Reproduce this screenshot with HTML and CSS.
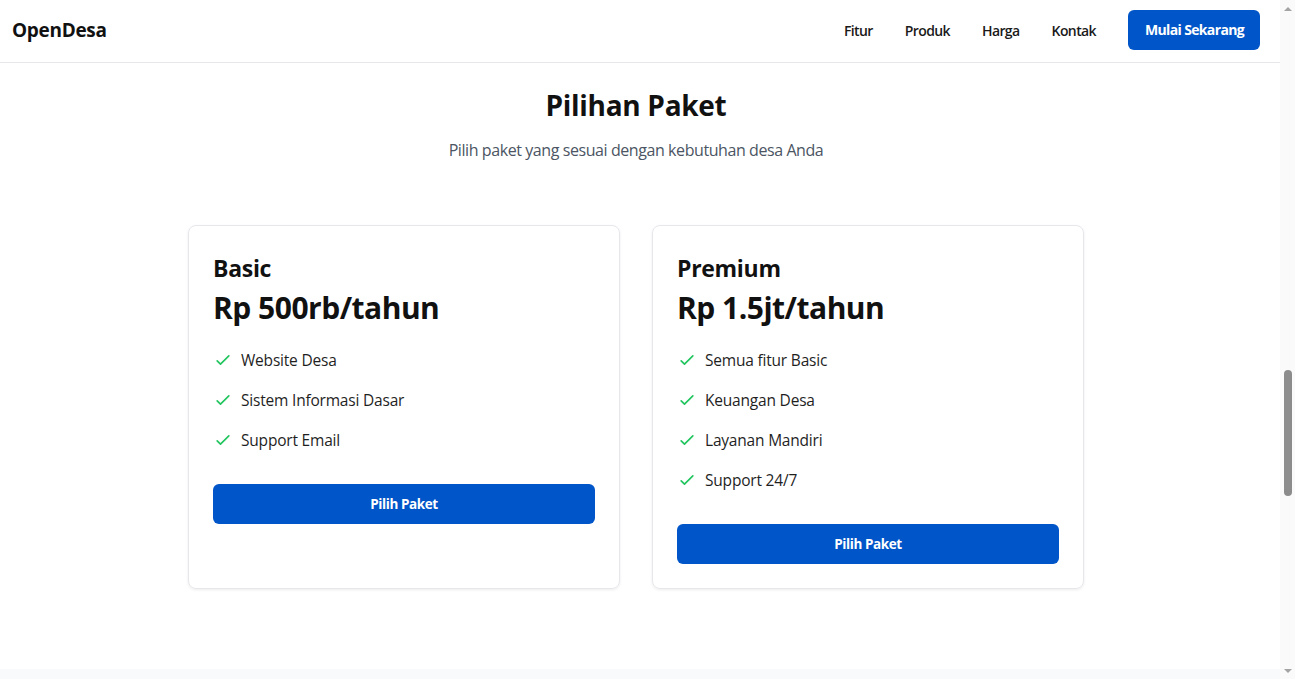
FILE: index.html
```html
<!DOCTYPE html>
<html lang="id">
<head>
<meta charset="utf-8">
<title>OpenDesa - Pilihan Paket</title>
<link rel="stylesheet" href="styles.css">
</head>
<body>
<div class="page">
  <header class="nav">
    <div class="logo">OpenDesa</div>
    <nav class="nav-links">
      <a href="#" class="nav-link">Fitur</a>
      <a href="#" class="nav-link">Produk</a>
      <a href="#" class="nav-link">Harga</a>
      <a href="#" class="nav-link">Kontak</a>
      <a href="#" class="nav-cta">Mulai Sekarang</a>
    </nav>
  </header>
  <main class="main">
    <section class="pricing">
      <h2 class="pricing-title">Pilihan Paket</h2>
      <p class="pricing-subtitle">Pilih paket yang sesuai dengan kebutuhan desa Anda</p>
      <div class="plans">
        <div class="plan">
          <h3 class="plan-name">Basic</h3>
          <div class="plan-price">Rp 500rb/tahun</div>
          <ul class="features">
            <li class="feature"><svg class="check" viewBox="0 0 24 24" fill="none" stroke="currentColor" stroke-width="2" stroke-linecap="round" stroke-linejoin="round"><path d="M5 13l4 4L19 7"/></svg><span>Website Desa</span></li>
            <li class="feature"><svg class="check" viewBox="0 0 24 24" fill="none" stroke="currentColor" stroke-width="2" stroke-linecap="round" stroke-linejoin="round"><path d="M5 13l4 4L19 7"/></svg><span>Sistem Informasi Dasar</span></li>
            <li class="feature"><svg class="check" viewBox="0 0 24 24" fill="none" stroke="currentColor" stroke-width="2" stroke-linecap="round" stroke-linejoin="round"><path d="M5 13l4 4L19 7"/></svg><span>Support Email</span></li>
          </ul>
          <a href="#" class="plan-btn">Pilih Paket</a>
        </div>
        <div class="plan">
          <h3 class="plan-name">Premium</h3>
          <div class="plan-price">Rp 1.5jt/tahun</div>
          <ul class="features">
            <li class="feature"><svg class="check" viewBox="0 0 24 24" fill="none" stroke="currentColor" stroke-width="2" stroke-linecap="round" stroke-linejoin="round"><path d="M5 13l4 4L19 7"/></svg><span>Semua fitur Basic</span></li>
            <li class="feature"><svg class="check" viewBox="0 0 24 24" fill="none" stroke="currentColor" stroke-width="2" stroke-linecap="round" stroke-linejoin="round"><path d="M5 13l4 4L19 7"/></svg><span>Keuangan Desa</span></li>
            <li class="feature"><svg class="check" viewBox="0 0 24 24" fill="none" stroke="currentColor" stroke-width="2" stroke-linecap="round" stroke-linejoin="round"><path d="M5 13l4 4L19 7"/></svg><span>Layanan Mandiri</span></li>
            <li class="feature"><svg class="check" viewBox="0 0 24 24" fill="none" stroke="currentColor" stroke-width="2" stroke-linecap="round" stroke-linejoin="round"><path d="M5 13l4 4L19 7"/></svg><span>Support 24/7</span></li>
          </ul>
          <a href="#" class="plan-btn">Pilih Paket</a>
        </div>
      </div>
    </section>
    <section class="next-section"></section>
  </main>
</div>
<div class="scrollbar" aria-hidden="true">
  <div class="sb-arrow sb-up"></div>
  <div class="sb-track"><div class="sb-thumb"></div></div>
  <div class="sb-arrow sb-down"></div>
</div>
</body>
</html>
```

FILE: styles.css
```css
* {
  box-sizing: border-box;
}
body {
  margin: 0;
  font-family: "Open Sans", "Noto Sans", sans-serif;
  color: #111111;
  background: #ffffff;
  height: 679px;
  overflow: hidden;
  display: flex;
}
.page {
  flex: 1;
  min-width: 0;
  height: 679px;
  overflow: hidden;
  display: flex;
  flex-direction: column;
}
.nav {
  height: 63px;
  flex-shrink: 0;
  display: flex;
  align-items: center;
  justify-content: space-between;
  padding: 0 20px 2px 12px;
  border-bottom: 1px solid #e5e7eb;
  background: #ffffff;
}
.logo {
  font-size: 19px;
  font-weight: 700;
  letter-spacing: -0.3px;
  color: #111111;
}
.nav-links {
  display: flex;
  align-items: center;
  gap: 32px;
}
.nav-link {
  font-size: 14px;
  font-weight: 600;
  color: #1a1a1a;
  text-decoration: none;
  letter-spacing: -0.6px;
}
.nav-cta {
  display: block;
  background: #0055c8;
  color: #ffffff;
  font-size: 14px;
  font-weight: 700;
  text-decoration: none;
  padding: 10px 16px 10px 17px;
  line-height: 20px;
  border-radius: 6px;
  letter-spacing: -0.65px;
}
.main {
  flex: 1;
  display: flex;
  flex-direction: column;
}
.pricing {
  padding: 24px 8px 80px 0;
  display: flex;
  flex-direction: column;
  align-items: center;
}
.pricing-title {
  margin: 0 0 15px;
  font-size: 28px;
  line-height: 36px;
  font-weight: 700;
  letter-spacing: -0.3px;
}
.pricing-subtitle {
  margin: 0 0 63px;
  font-size: 16px;
  line-height: 24px;
  color: #4b5563;
  letter-spacing: -0.42px;
}
.plans {
  display: flex;
  gap: 32px;
  width: 896px;
}
.plan {
  flex: 1;
  border: 1px solid #e5e7eb;
  border-radius: 8px;
  box-shadow: 0 1px 3px rgba(0, 0, 0, 0.08);
  padding: 24px;
  display: flex;
  flex-direction: column;
}
.plan-name {
  margin: 2px 0 6px;
  font-size: 23px;
  line-height: 32px;
  font-weight: 700;
  letter-spacing: -0.3px;
}
.plan-price {
  font-size: 30px;
  line-height: 36px;
  font-weight: 700;
  margin-bottom: 22px;
  letter-spacing: -0.5px;
}
.features {
  list-style: none;
  margin: 0 0 32px;
  padding: 0;
  display: flex;
  flex-direction: column;
  gap: 16px;
}
.feature {
  display: flex;
  align-items: center;
  font-size: 15.5px;
  line-height: 24px;
  color: #1f1f1f;
  letter-spacing: -0.2px;
}
.check {
  width: 20px;
  height: 20px;
  color: #22c55e;
  margin-right: 8px;
  flex-shrink: 0;
}
.plan-btn {
  display: block;
  background: #0055c8;
  color: #ffffff;
  text-align: center;
  font-size: 13.5px;
  font-weight: 700;
  line-height: 24px;
  padding: 8px 16px;
  border-radius: 6px;
  text-decoration: none;
  letter-spacing: -0.4px;
}
.next-section {
  background: #f9fafb;
  flex: 1;
}
.scrollbar {
  width: 15px;
  flex-shrink: 0;
  height: 679px;
  background: #fafafa;
  display: flex;
  flex-direction: column;
  align-items: center;
}
.sb-arrow {
  height: 17px;
  width: 15px;
  display: flex;
  align-items: center;
  justify-content: center;
  flex-shrink: 0;
}
.sb-arrow::before {
  content: "";
  width: 0;
  height: 0;
  border-left: 4px solid transparent;
  border-right: 4px solid transparent;
}
.sb-up::before {
  border-bottom: 4px solid #a3a3a3;
}
.sb-down::before {
  border-top: 4px solid #a3a3a3;
}
.sb-track {
  flex: 1;
  width: 15px;
  display: flex;
  justify-content: center;
}
.sb-thumb {
  margin-top: 353px;
  width: 8px;
  height: 126px;
  border-radius: 4px;
  background: #8c8c8c;
}
```
